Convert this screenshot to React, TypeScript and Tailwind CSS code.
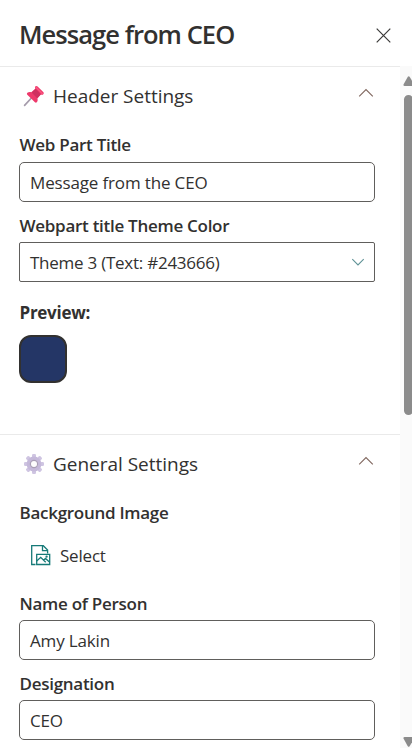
import type { ReactNode } from 'react';

function Chevron({ down = false }: { down?: boolean }) {
  return (
    <svg className="block" width="16" height="10" viewBox="0 0 16 10" fill="none" stroke={down ? '#5f9296' : '#80675f'} strokeWidth="1.1">
      <path d={down ? 'M2.3 2.2 8 7.900l5.700-5.700' : 'M1.200 8.300 8 1.500l6.800 6.800'} />
    </svg>
  );
}

function PinIcon() {
  return (
    <svg className="block" width="22" height="22" viewBox="0 0 22 22">
      <path d="M1.600 20.400 8.400 13" stroke="#a59bab" strokeWidth="1.700" strokeLinecap="round" />
      <path d="M12.300 1.500c.7-.8 1.600-.7 2.300 0l5.600 5.600c.8.8.7 1.700 0 2.200-.7.6-1.600.6-2.300.3l-3.500 3.800c.5 1.400.3 3-.6 3.900-.6.6-1.300.5-1.900 0L4.300 9.700c-.6-.6-.5-1.400.1-1.900 1-.8 2.500-1 3.900-.5l4-3.600c-.4-.8-.5-1.600 0-2.200Z" fill="#ee3a6c" />
      <path d="m12.600 3.800 5.200 5.500-3.600 3.900-5.600-5.600Z" fill="#cf3060" />
      <path d="m12.900 2.200 6.700 6.700" stroke="#fb5880" strokeWidth="1.300" strokeLinecap="round" />
    </svg>
  );
}

function GearIcon() {
  return (
    <svg className="block" width="22" height="22" viewBox="0 0 22 22">
      <g fill="#cfc5e2">
        {[0, 45, 90, 135, 180, 225, 270, 315].map((a) => (
          <rect key={a} x="9" y="1" width="4" height="6" rx="1.200" transform={`rotate(${a} 11 11)`} />
        ))}
      </g>
      <circle cx="11" cy="11" r="5.600" fill="none" stroke="#c5b9da" strokeWidth="3.600" />
      <circle cx="11" cy="11" r="3.600" fill="#fdfdfd" stroke="#a99eb6" strokeWidth="1.200" />
    </svg>
  );
}

function ImageFileIcon() {
  return (
    <svg className="block" width="20" height="21" viewBox="0 0 20 21" fill="none" stroke="#167a78" strokeWidth="1.300">
      <path d="M4.500 19.500H.7V.7h11.600l4.300 4.300v3.500" />
      <path d="M11.500.7v5h5" />
      <path d="M5.700 9.300h13v10.200h-13z" />
      <path d="m5.700 16 4-3.700 5 5M12.500 15.300l2-1.800 4.200 3.800" />
      <circle cx="15.600" cy="11.700" r=".5" />
    </svg>
  );
}

function SectionHeader({ icon, children }: { icon: ReactNode; children: ReactNode }) {
  return (
    <div className="flex h-[58px] items-center pl-[23px] pr-[26px]">
      {icon}
      <h2 className="ml-2 flex-1 text-[19px] leading-6 tracking-[-0.02px]">{children}</h2>
      <div className="mb-[7px]"><Chevron /></div>
    </div>
  );
}

function Label({ className = '', children }: { className?: string; children: ReactNode }) {
  return <div className={`flex items-center pl-[19.5px] text-[17px] tracking-[-0.28px] ${className}`}>{children}</div>;
}

function Field({ children }: { children: ReactNode }) {
  return <div className="ml-[19px] flex h-10 w-[356px] items-center rounded-[5px] border border-[#605e5c] pl-[10px] pt-px text-[17px] tracking-[-0.15px]">{children}</div>;
}

export default function App() {
  return (
    <main className="flex h-[748px] w-[412px] flex-col overflow-hidden bg-white font-['Open_Sans',sans-serif] text-[#323130] whitespace-nowrap">
      <header className="flex h-[66px] shrink-0 items-center justify-between pl-[19px] pr-[21px]">
        <h1 className="pt-px text-[25.5px] font-semibold leading-8 tracking-[-0.95px]">Message from CEO</h1>
        <svg className="mt-[5px]" width="15" height="15" viewBox="0 0 15 15" stroke="#3b3a39" strokeWidth="1.200">
          <path d="m.7.7 13.600 13.600M14.300.7.7 14.300" />
        </svg>
      </header>
      <div className="flex min-h-0 flex-1">
        <div className="w-[400px] shrink-0">
          <section className="h-[368px] border-t border-[#eaeaea]">
            <SectionHeader icon={<PinIcon />}>Header Settings</SectionHeader>
            <Label className="h-[37px] pt-[3px] font-semibold">Web Part Title</Label>
            <Field>Message from the CEO</Field>
            <Label className="h-10 pt-[8px] font-semibold">Webpart title Theme Color</Label>
            <div className="ml-[19px] flex h-10 w-[356px] items-center justify-between rounded-[2px] border border-[#605e5c] pl-[10px] pr-[8px] text-[17px]">
              <span className="pt-px tracking-[-0.25px]">Theme 3 (Text: #243666)</span>
              <Chevron down />
            </div>
            <Label className="h-[53px] pt-[8px] font-bold">Preview:</Label>
            <div className="ml-[19px] size-12 rounded-[12px] border-2 border-[#323130] bg-[#243666]" />
          </section>
          <section className="border-t border-[#eaeaea]">
            <SectionHeader icon={<GearIcon />}>General Settings</SectionHeader>
            <Label className="h-[38px] pt-[2px] font-semibold">Background Image</Label>
            <div className="flex h-[49px] items-center pl-[31px] text-[17px] tracking-[-0.2px]">
              <ImageFileIcon />
              <span className="ml-[9px] pt-px">Select</span>
            </div>
            <Label className="h-10 pt-[8px] font-semibold">Name of Person</Label>
            <Field>Amy Lakin</Field>
            <Label className="h-10 pt-[8px] font-semibold">Designation</Label>
            <Field>CEO</Field>
          </section>
        </div>
        <div className="flex w-3 shrink-0 flex-col overflow-hidden bg-[#fafafa] pl-[3px]">
          <svg className="mt-[10px] block shrink-0" width="10" height="10" viewBox="0 0 10 10" fill="#8b8b8b">
            <path d="M4.800.8q.9-1.200 1.800 0L11 8v2H1.500Q0 10 .6 8.200Z" />
          </svg>
          <div className="ml-px mt-[9px] h-[320px] w-[9px] shrink-0 rounded-[4.5px] bg-[#8b8b8b]" />
          <svg className="mb-px mt-auto block shrink-0" width="10" height="10" viewBox="0 0 10 10" fill="#8b8b8b">
            <path d="M4.800 9.200q.9 1.200 1.800 0L11 2V0H1.500Q0 0 .6 1.800Z" />
          </svg>
        </div>
      </div>
    </main>
  );
}
